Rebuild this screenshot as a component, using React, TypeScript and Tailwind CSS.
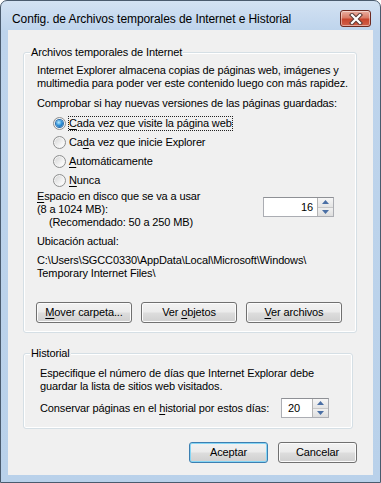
import React from "react";

function U({ children }: { children: React.ReactNode }) {
  return <span className="underline decoration-1 underline-offset-[2px]">{children}</span>;
}

function Radio({ checked, focus, children }: { checked?: boolean; focus?: boolean; children: React.ReactNode }) {
  return (
    <div className="flex h-[19px] items-center">
      <span className="flex h-[13px] w-[13px] items-center justify-center rounded-full border border-[#8e8f8f] bg-[linear-gradient(135deg,#d2d2d2,#f7f7f7_70%,#ffffff)] shadow-[inset_0_0_0_1px_#f4f4f4]">
        {checked && (
          <span className="h-[7px] w-[7px] rounded-full bg-[radial-gradient(circle_at_40%_35%,#b9ecff,#2b8fd8_50%,#0b4f93)] shadow-[0_0_0_1px_#2a6fae]" />
        )}
      </span>
      <span
        className={`ml-[2px] border px-0 leading-[13px] ${
          focus ? "border-dotted border-[#222]" : "border-transparent"
        }`}
      >
        {children}
      </span>
    </div>
  );
}

function SpinArrows() {
  return (
    <div className="flex h-full w-[16px] flex-col border-l border-[#b4b4b4]">
      <div className="flex flex-1 items-center justify-center border-b border-[#c8c8c8] bg-[linear-gradient(#f6f6f6,#e4e4e4)]">
        <svg width="7" height="4" viewBox="0 0 7 4">
          <path d="M0 4 L3.5 0 L7 4 Z" fill="#4a6fa5" />
        </svg>
      </div>
      <div className="flex flex-1 items-center justify-center bg-[linear-gradient(#f0f0f0,#dedede)]">
        <svg width="7" height="4" viewBox="0 0 7 4">
          <path d="M0 0 L7 0 L3.5 4 Z" fill="#4a6fa5" />
        </svg>
      </div>
    </div>
  );
}

function Btn({ children, w, def }: { children: React.ReactNode; w: string; def?: boolean }) {
  return (
    <div
      className={`flex h-[21px] ${w} items-center justify-center rounded-[3px] border ${
        def
          ? "border-[#3c7fb1] shadow-[inset_0_0_0_1px_#86d6f5]"
          : "border-[#707070] shadow-[inset_0_0_0_1px_#fbfbfb]"
      } bg-[linear-gradient(#f2f2f2_0%,#ebebeb_48%,#dddddd_52%,#cfcfcf_100%)] leading-[13px] text-black`}
    >
      <span>{children}</span>
    </div>
  );
}

export default function App() {
  return (
    <div className="whitespace-nowrap font-['Liberation_Sans',Arial,sans-serif] text-[11px] tracking-[-0.13px] text-black">
      <div className="flex h-[483px] w-[381px] flex-col rounded-t-[7px] border border-[#4a5b6e] bg-[linear-gradient(#d3e2f3_0px,#bed4ec_30px,#b9d1ea_100%)]">
        {/* title bar */}
        <div className="flex h-[29px] items-start">
          <div className="ml-[11px] mt-[11px] text-[12px] leading-[14px] tracking-[-0.08px]">
            Config. de Archivos temporales de Internet e Historial
          </div>
          <div className="ml-auto mr-[9px] mt-[9px] flex h-[17px] w-[31px] items-center justify-center rounded-[3px] border border-[#6e2a20] bg-[linear-gradient(#eab0a2_0%,#d97b66_45%,#c7452d_55%,#d2614a_100%)] shadow-[inset_0_0_0_1px_rgba(255,255,255,0.45)]">
            <svg width="14" height="12" viewBox="0 0 14 12">
              <path d="M3 2 L11 10 M11 2 L3 10" stroke="#5a3b36" strokeWidth="4.2" strokeLinecap="square" />
              <path d="M3 2 L11 10 M11 2 L3 10" stroke="#ffffff" strokeWidth="2.2" strokeLinecap="square" />
            </svg>
          </div>
        </div>

        {/* client */}
        <div className="mx-[7px] flex h-[445px] flex-col bg-[#f0f0f0] pl-[15px] pr-[16px] pt-[22px]">
          {/* group 1 */}
          <div className="relative w-[334px] rounded-[3px] border border-[#d5dfe5] pb-[9px] pl-[13px] pr-[12px] pt-[11px] shadow-[inset_0_0_0_1px_#ffffff]">
            <span className="absolute left-[6px] top-[-7px] bg-[#f0f0f0] px-[1px] leading-[13px]">
              Archivos temporales de Internet
            </span>
            <div className="leading-[13px]">
              Internet Explorer almacena copias de páginas web, imágenes y
              <br />
              multimedia para poder ver este contenido luego con más rapidez.
            </div>
            <div className="mt-[7px] leading-[13px]">Comprobar si hay nuevas versiones de las páginas guardadas:</div>
            <div className="ml-[16px] mt-[4px] flex flex-col">
              <Radio checked focus>
                <U>C</U>ada vez que visite la página web
              </Radio>
              <Radio>
                Ca<U>d</U>a vez que inicie Explorer
              </Radio>
              <Radio>
                <U>A</U>utomáticamente
              </Radio>
              <Radio>
                <U>N</U>unca
              </Radio>
            </div>
            <div className="flex items-start">
              <div className="leading-[13px]">
                <div>
                  <U>E</U>spacio en disco que se va a usar
                </div>
                <div>(8 a 1024 MB):</div>
                <div className="pl-[12px]">(Recomendado: 50 a 250 MB)</div>
              </div>
              <div className="ml-auto mr-[10px] mt-[7px] flex h-[20px] w-[71px] border border-[#abadb3] border-t-[#8e9095] bg-white">
                <div className="flex flex-1 items-center justify-end pr-[4px] leading-[13px]">16</div>
                <SpinArrows />
              </div>
            </div>
            <div className="mt-[6px] leading-[13px]">Ubicación actual:</div>
            <div className="mt-[6px] leading-[13px]">
              C:\Users\SGCC0330\AppData\Local\Microsoft\Windows\
              <br />
              Temporary Internet Files\
            </div>
            <div className="-ml-[1px] mt-[22px] flex gap-[9px]">
              <Btn w="w-[96px]">
                <U>M</U>over carpeta...
              </Btn>
              <Btn w="w-[96px]">
                Ver <U>o</U>bjetos
              </Btn>
              <Btn w="w-[96px]">
                <U>V</U>er archivos
              </Btn>
            </div>
          </div>

          {/* group 2 */}
          <div className="relative mt-[20px] w-[330px] rounded-[3px] border border-[#d5dfe5] pb-[10px] pl-[16px] pr-[16px] pt-[13px] shadow-[inset_0_0_0_1px_#ffffff]">
            <span className="absolute left-[6px] top-[-7px] bg-[#f0f0f0] px-[1px] leading-[13px]">Historial</span>
            <div className="leading-[13px]">
              Especifique el número de días que Internet Explorar debe
              <br />
              guardar la lista de sitios web visitados.
            </div>
            <div className="mt-[5px] flex h-[20px] items-center">
              <span className="leading-[13px]">
                Conservar páginas en el <U>h</U>istorial por estos días:
              </span>
              <div className="ml-auto mr-[7px] flex h-[20px] w-[48px] border border-[#abadb3] border-t-[#8e9095] bg-white">
                <div className="flex flex-1 items-center pl-[6px] leading-[13px]">20</div>
                <SpinArrows />
              </div>
            </div>
          </div>

          {/* dialog buttons */}
          <div className="mt-[13px] flex justify-end gap-[10px]">
            <Btn w="w-[79px]" def>
              Aceptar
            </Btn>
            <Btn w="w-[79px]">Cancelar</Btn>
          </div>
        </div>
      </div>
    </div>
  );
}
